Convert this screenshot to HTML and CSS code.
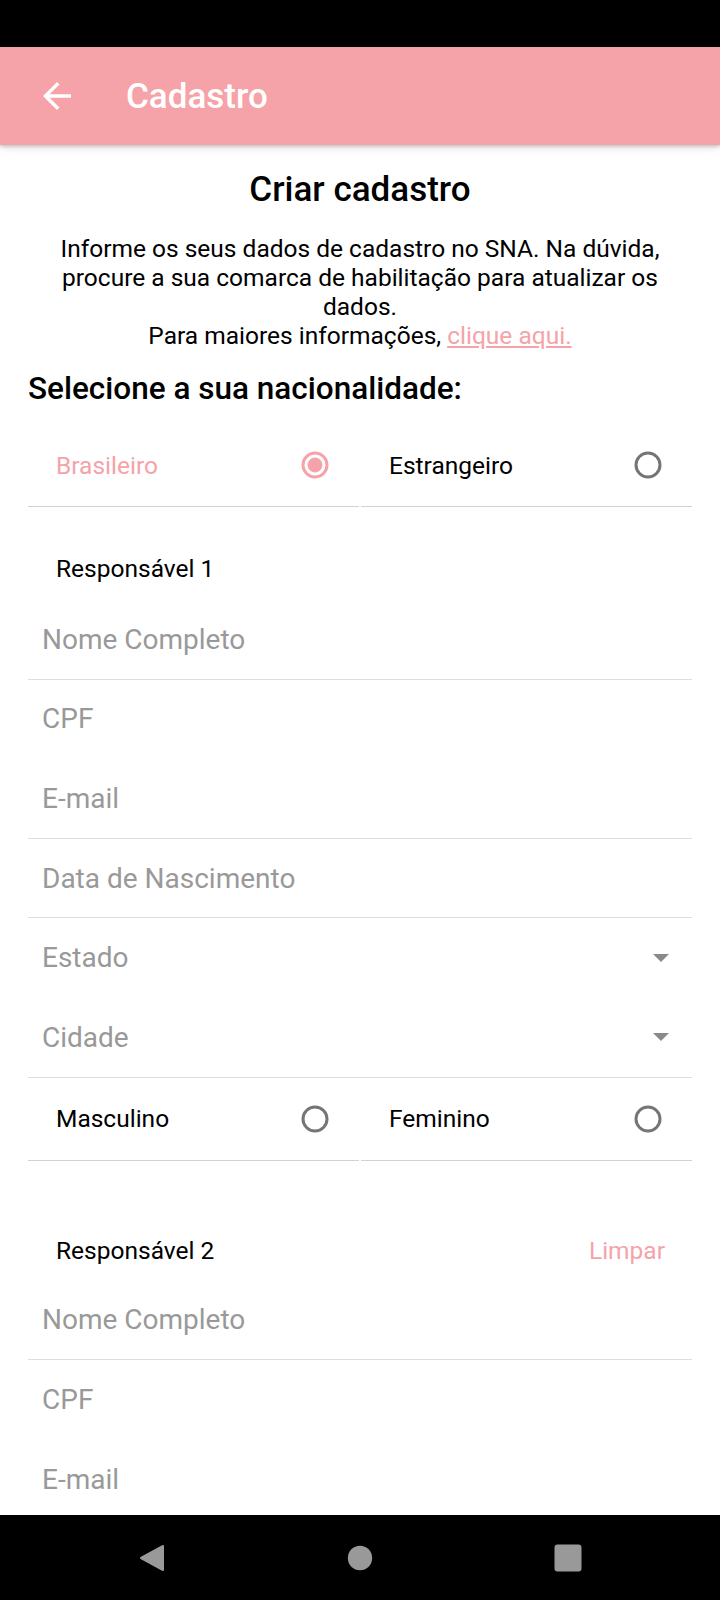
FILE: index.html
```html
<!DOCTYPE html>
<html lang="pt-BR">
<head>
<meta charset="utf-8">
<title>Cadastro</title>
<link rel="stylesheet" href="styles.css">
</head>
<body>
<div class="screen">
  <div class="statusbar"></div>
  <header class="appbar">
    <svg class="back" viewBox="0 0 24 24" width="42" height="42"><path fill="#fff" d="M20 11H7.83l5.59-5.59L12 4l-8 8 8 8 1.41-1.41L7.83 13H20v-2z"/></svg>
    <h1 class="appbar-title">Cadastro</h1>
  </header>
  <main class="content">
    <h2 class="title">Criar cadastro</h2>
    <p class="intro">Informe os seus dados de cadastro no SNA. Na dúvida,<br>procure a sua comarca de habilitação para atualizar os<br>dados.<br>Para maiores informações, <a class="link" href="#">clique aqui.</a></p>
    <h3 class="section-label">Selecione a sua nacionalidade:</h3>
    <div class="radio-row">
      <div class="radio-cell selected">
        <span>Brasileiro</span>
        <svg class="radio" viewBox="0 0 28 28" width="28" height="28"><circle cx="14" cy="14" r="12" fill="none" stroke-width="3"/><circle class="dot" cx="14" cy="14" r="7"/></svg>
      </div>
      <div class="radio-cell">
        <span>Estrangeiro</span>
        <svg class="radio" viewBox="0 0 28 28" width="28" height="28"><circle cx="14" cy="14" r="12" fill="none" stroke-width="3"/></svg>
      </div>
    </div>

    <div class="group-head first"><span>Responsável 1</span></div>
    <div class="field line">Nome Completo</div>
    <div class="field">CPF</div>
    <div class="field line">E-mail</div>
    <div class="field line">Data de Nascimento</div>
    <div class="field select"><span>Estado</span><i class="caret"></i></div>
    <div class="field select line"><span>Cidade</span><i class="caret"></i></div>
    <div class="radio-row">
      <div class="radio-cell">
        <span>Masculino</span>
        <svg class="radio" viewBox="0 0 28 28" width="28" height="28"><circle cx="14" cy="14" r="12" fill="none" stroke-width="3"/></svg>
      </div>
      <div class="radio-cell">
        <span>Feminino</span>
        <svg class="radio" viewBox="0 0 28 28" width="28" height="28"><circle cx="14" cy="14" r="12" fill="none" stroke-width="3"/></svg>
      </div>
    </div>

    <div class="group-head second"><span>Responsável 2</span><a class="clear" href="#">Limpar</a></div>
    <div class="field line">Nome Completo</div>
    <div class="field">CPF</div>
    <div class="field line">E-mail</div>
  </main>
  <nav class="navbar">
    <svg class="nav-icon" viewBox="0 0 28 28" width="28" height="28"><path d="M25 2 L25 26 L3 14 Z" fill="#999" stroke="#999" stroke-width="2" stroke-linejoin="round"/></svg>
    <svg class="nav-icon" viewBox="0 0 28 28" width="28" height="28"><circle cx="14" cy="14" r="12.2" fill="#999"/></svg>
    <svg class="nav-icon" viewBox="0 0 28 28" width="28" height="28"><rect x="0.5" y="0.5" width="27" height="27" rx="3" fill="#999"/></svg>
  </nav>
</div>
</body>
</html>
```

FILE: styles.css
```css
* { box-sizing: border-box; }

html, body {
  margin: 0;
  padding: 0;
  background: #fff;
}

body {
  font-family: Roboto, "Noto Sans", "Liberation Sans", sans-serif;
  color: #000;
}

.screen {
  width: 720px;
  height: 1600px;
  display: flex;
  flex-direction: column;
  overflow: hidden;
}

.statusbar {
  height: 47px;
  flex: none;
  background: #000;
}

.appbar {
  height: 98px;
  flex: none;
  background: #f5a3a8;
  display: flex;
  align-items: center;
  padding-left: 36px;
  position: relative;
  z-index: 2;
  box-shadow: 0 2px 3px rgba(0, 0, 0, 0.16), 0 4px 8px rgba(0, 0, 0, 0.08);
}

.back {
  display: block;
  flex: none;
}

.appbar-title {
  margin: 0 0 0 48px;
  font-size: 35px;
  font-weight: 500;
  line-height: 41px;
  color: #fff;
}

.content {
  flex: 1;
  min-height: 0;
  overflow: hidden;
  padding: 23.5px 28px 0;
}

.title {
  margin: 0;
  text-align: center;
  font-size: 35px;
  font-weight: 500;
  line-height: 41px;
}

.intro {
  margin: 24.5px 0 0;
  text-align: center;
  font-size: 24.5px;
  line-height: 29px;
}

.link {
  color: #f5a3a8;
  text-decoration: underline;
}

.section-label {
  margin: 20px 0 0;
  font-size: 31.5px;
  font-weight: 500;
  line-height: 37px;
}

.radio-row {
  margin-top: 17px;
  display: grid;
  grid-template-columns: 1fr 1fr;
  column-gap: 2px;
}

.field + .radio-row {
  margin-top: 0;
}

.radio-cell {
  height: 83px;
  display: flex;
  align-items: center;
  justify-content: space-between;
  padding: 0 30px 0 28px;
  border-bottom: 1px solid #d2d2d2;
  font-size: 24.5px;
  line-height: 29px;
}

.radio circle {
  stroke: #757575;
}

.radio-cell.selected span {
  color: #f5a3a8;
}

.radio-cell.selected .radio circle {
  stroke: #f5a3a8;
}

.radio .dot {
  fill: #f5a3a8;
  stroke: none;
}

.group-head {
  display: flex;
  align-items: center;
  justify-content: space-between;
  padding: 0 27px 0 28px;
  font-size: 24.5px;
  line-height: 29px;
}

.group-head.first {
  margin: 47px 0 17px;
}

.group-head.second {
  margin: 75px 0 16px;
}

.clear {
  color: #f5a3a8;
  text-decoration: none;
}

.field {
  height: 79.6px;
  display: flex;
  align-items: center;
  justify-content: space-between;
  padding: 0 23px 0 14px;
  font-size: 28px;
  line-height: 33px;
  color: #999;
  border-bottom: 1px solid transparent;
}

.field.line {
  border-bottom-color: #dedede;
}

.caret {
  display: block;
  width: 0;
  height: 0;
  border-left: 8px solid transparent;
  border-right: 8px solid transparent;
  border-top: 8px solid #8a8a8a;
}

.navbar {
  height: 85px;
  flex: none;
  background: #000;
  display: flex;
  align-items: center;
  justify-content: center;
  gap: 180px;
}

.nav-icon {
  display: block;
}
```
